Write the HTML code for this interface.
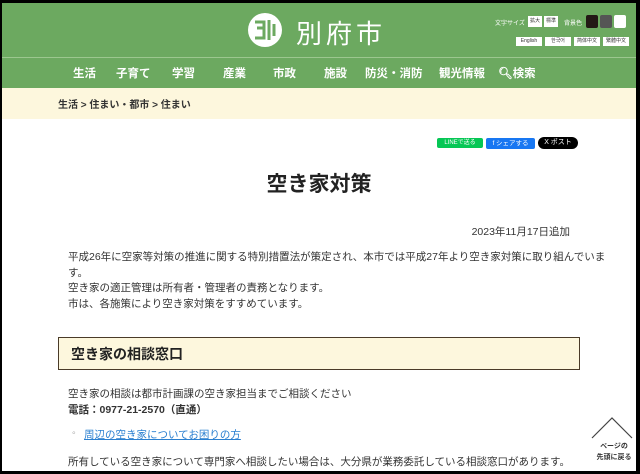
<!DOCTYPE html>
<html><head><meta charset="utf-8"><style>
*{margin:0;padding:0;box-sizing:border-box}
body{width:640px;height:474px;overflow:hidden;background:#000;font-family:"Liberation Sans","Noto Sans CJK JP",sans-serif;position:relative}
.page{position:absolute;left:2px;top:3px;width:634px;height:468px;background:#fff;overflow:hidden}
.hdr{position:absolute;left:0;top:0;width:634px;height:85px;background:#6ca960}
.line{position:absolute;left:0;top:54px;width:634px;height:1px;background:#9cc78f}
.a{position:absolute;white-space:nowrap}
.nav{color:#fff;font-size:11.5px;font-weight:bold;top:62px}
.bc{position:absolute;left:0;top:85px;width:634px;height:31px;background:#fdf7dd}
.t{font-size:10.5px;color:#333}
.btn{position:absolute;background:#fff;font-size:5px;color:#333;text-align:center;line-height:9px;height:9px}
</style></head><body><div class="page">
<div class="hdr"></div><div class="line"></div>
<svg class="a" style="left:245px;top:9px" width="36" height="36" viewBox="0 0 36 36"><circle cx="18" cy="18" r="17" fill="#fff"/><path d="M8 10h9v6h-6M10 16h7v10H8" stroke="#6ca960" stroke-width="3" fill="none"/><path d="M22 8v20M27 12v12" stroke="#6ca960" stroke-width="3"/></svg>
<div class="a" style="left:294px;top:11px;font-size:26px;color:#fff;letter-spacing:4px">別府市</div>
<div class="a" style="left:493px;top:15px;font-size:6px;color:#fff">文字サイズ</div>
<div class="btn" style="left:526px;top:13px;width:14px;height:11px;line-height:11px">拡大</div>
<div class="btn" style="left:542px;top:13px;width:14px;height:11px;line-height:11px">標準</div>
<div class="a" style="left:562px;top:15px;font-size:6px;color:#fff">背景色</div>
<div class="a" style="left:584px;top:12px;width:12px;height:13px;background:#231815;border-radius:2px"></div>
<div class="a" style="left:598px;top:12px;width:12px;height:13px;background:#555;border-radius:2px"></div>
<div class="a" style="left:612px;top:12px;width:12px;height:13px;background:#fff;border-radius:2px"></div>
<div class="btn" style="left:514px;top:34px;width:26px">English</div>
<div class="btn" style="left:543px;top:34px;width:26px">한국어</div>
<div class="btn" style="left:572px;top:34px;width:26px">简体中文</div>
<div class="btn" style="left:601px;top:34px;width:26px">繁體中文</div>
<div class="a nav" style="left:71px">生活</div>
<div class="a nav" style="left:114px">子育て</div>
<div class="a nav" style="left:170px">学習</div>
<div class="a nav" style="left:221px">産業</div>
<div class="a nav" style="left:271px">市政</div>
<div class="a nav" style="left:322px">施設</div>
<div class="a nav" style="left:363px">防災・消防</div>
<div class="a nav" style="left:437px">観光情報</div>
<div class="a nav" style="left:496px">&#x1F50D;&#xFE0E;検索</div>
<div class="bc"></div>
<div class="a" style="left:56px;top:93px;font-size:10px;font-weight:bold;color:#333">生活 &gt; 住まい・都市 &gt; 住まい</div>
<div class="a" style="left:435px;top:135px;width:46px;height:10px;background:#06c755;border-radius:2px;font-size:6px;color:#fff;text-align:center;line-height:10px">LINEで送る</div>
<div class="a" style="left:484px;top:135px;width:49px;height:11px;background:#1877f2;border-radius:2px;font-size:6.5px;color:#fff;text-align:center;line-height:11px">f シェアする</div>
<div class="a" style="left:536px;top:134px;width:40px;height:12px;background:#000;border-radius:6px;font-size:7px;color:#fff;text-align:center;line-height:12px">X ポスト</div>
<div class="a" style="left:0;width:634px;top:165px;text-align:center;font-size:21px;font-weight:bold;color:#222">空き家対策</div>
<div class="a t" style="right:66px;top:221px">2023年11月17日追加</div>
<div class="a t" style="left:66px;top:247px;line-height:15.5px">平成26年に空家等対策の推進に関する特別措置法が策定され、本市では平成27年より空き家対策に取り組んでいま<br>す。<br>空き家の適正管理は所有者・管理者の責務となります。<br>市は、各施策により空き家対策をすすめています。</div>
<div class="a" style="left:56px;top:334px;width:522px;height:33px;background:#fdf7dd;border:1px solid #4a3b28"></div>
<div class="a" style="left:69px;top:341px;font-size:14px;font-weight:bold;color:#222">空き家の相談窓口</div>
<div class="a t" style="left:66px;top:383px;line-height:16px">空き家の相談は都市計画課の空き家担当までご相談ください<br><b>電話：0977-21-2570（直通）</b></div>
<div class="a t" style="left:70px;top:424px;color:#999">◦</div>
<div class="a t" style="left:82px;top:424px;color:#2a7fd0;text-decoration:underline">周辺の空き家についてお困りの方</div>
<div class="a t" style="left:66px;top:451px">所有している空き家について専門家へ相談したい場合は、大分県が業務委託している相談窓口があります。</div>
<svg class="a" style="left:588px;top:413px" width="44" height="24"><path d="M2 22L22 2L42 22" stroke="#444" fill="none" stroke-width="1.2"/></svg>
<div class="a" style="left:590px;top:438px;font-size:7px;font-weight:bold;color:#333;text-align:center;width:44px;line-height:11px">ページの<br>先頭に戻る</div>
</div></body></html>
